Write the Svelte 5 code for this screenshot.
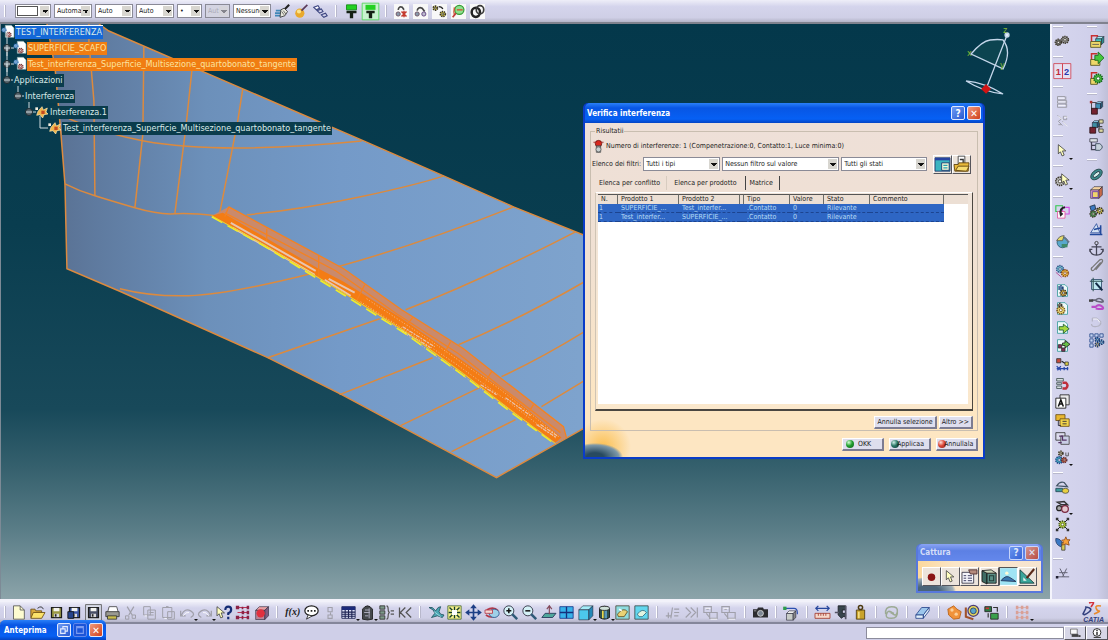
<script>
  // Small drawing helpers, every icon is drawn on an 18x18 grid
  const gear = (x, y, r, fill = "#e8c84c", line = "#3a3528") =>
    `<circle cx="${x}" cy="${y}" r="${r}" fill="${fill}" stroke="${line}" stroke-width="2" stroke-dasharray="1.6 .9"/><circle cx="${x}" cy="${y}" r="${r * 0.4}" fill="#fff" stroke="${line}"/>`;
  const sheet = `<path d="M3 2h9l3 3v11H3z" fill="#eefafa" stroke="#3a9c9c"/>`;
  const disk = (c) =>
    `<path d="M3 3h12v12H3z" fill="${c}" stroke="#1c1c1c" stroke-width="1.500"/><path d="M5.500 3.500h7v4h-7z" fill="#f4f4f0"/><path d="M6 10.500h6v4H6z" fill="#d8d8dc"/><path d="M7 11h2v3H7z" fill="#222"/>`;
  const cube = (x, y, s, a, b, c) =>
    `<path d="M${x} ${y + s * 0.4}l${s * 0.4} -${s * 0.4}h${s}l-${s * 0.4} ${s * 0.4}z" fill="${a}" stroke="#223"  stroke-width=".7"/><path d="M${x} ${y + s * 0.4}h${s}v${s}h-${s}z" fill="${b}" stroke="#223" stroke-width=".7"/><path d="M${x + s} ${y + s * 0.4}l${s * 0.4} -${s * 0.4}v${s}l-${s * 0.4} ${s * 0.4}z" fill="${c}" stroke="#223" stroke-width=".7"/>`;
  const arrow = (x, y) =>
    `<path d="M${x} ${y}v11l2.500 -2.500 2 5 2.500 -1 -2 -5h4z" fill="#ffffc0" stroke="#333" stroke-width=".9"/>`;
  const stroke = (d, c = "#333", w = 1) =>
    `<path d="${d}" fill="none" stroke="${c}" stroke-width="${w}"/>`;
  const fill = (d, c, s = "none") => `<path d="${d}" fill="${c}" stroke="${s}"/>`;
  const white = `<path d="M0 0h18v18H0z" fill="#f8f8f8"/>`;
  const ghost = "#a0a0aa";

  const icons = {
    brush: stroke("M1 8h7M0 11h8M0 14h9", "#3f87b8", 2) + fill("M7 7l4 -2 4 4 -3 5 -6 2z", "#e8e8dc", "#333") + stroke("M12 6l5 -5", "#222", 2.5) + stroke("M8 9l3 4M10 8l3 4", "#555"),
    wand: `<circle cx="7" cy="11" r="5.500" fill="#e9a92c"/><circle cx="6" cy="9" r="2.500" fill="#fbe48c"/>` + stroke("M9 8l7 -7", "#5a3a5a", 2),
    chain: stroke("M1 4l5 -2 2 3 -4 2zM5 8l5 -2 2 3 -4 2zM10 13l5 -2 2 3 -4 2z", "#3c4580", 1.3) + fill("M2.500 4.500l3 -1.500 1 1.500 -2 1z", "#fff"),
    paint: fill("M3 1h12v6H3z", "#23d022", "#118811") + fill("M3 8h12v3H11v6H7v-6H3z", "#142014"),
    paintOn: `<path d="M-1 -1h20v20h-20z" fill="#c8f2cf" stroke="#4ed257"/>` + fill("M3 1h12v6H3z", "#23d022") + fill("M4 8h10v3H11v6H7v-6H4z", "#142014"),
    clashX: white + stroke("M5 7q1 -5 5 -3l2 3", "#444", 2) + `<circle cx="5" cy="12" r="2.500" fill="#89a" stroke="#645"/>` + stroke("M9 9l6 6M15 9l-6 6M12 8v8", "#c4392c", 1.8),
    clash: white + stroke("M5 8q1 -5 6 -3l3 4", "#444", 2) + `<circle cx="5" cy="12" r="2.500" fill="#89a" stroke="#645"/><circle cx="13" cy="12" r="2.500" fill="#bbc" stroke="#537"/>`,
    clashGears: white + gear(4, 5, 2.5, "#ded24a") + gear(13, 12, 3, "#ded24a") + stroke("M8 3q4 0 5 3", "#222", 1.5),
    clashFind: white + `<circle cx="10" cy="7" r="5.500" fill="#8ee08e" stroke="#369c36" stroke-width="1.500"/>` + stroke("M7 7h7M4 4q-1 6 0 9", "#d04a2c", 1.5) + stroke("M6 11l-4 5", "#c23a3a", 2),
    ring: white + `<ellipse cx="7" cy="10" rx="5" ry="5.500" fill="none" stroke="#222" stroke-width="3"/><ellipse cx="12" cy="7" rx="4.500" ry="5" fill="none" stroke="#3a3a3a" stroke-width="2"/>`,

    gears: gear(4, 10, 3.5, "#777") + gear(12, 7, 4, "#999"),
    views: `<path d="M-1.500 -.5h10.500v18h-10.500zM9 -.5h10v18H9z" fill="#e6e0f0" stroke="#cf4250" stroke-width="1"/>`,
    ghostBox: stroke("M3 3h9v4H3zM3 8h11v3H3zM3 12h11v4H3zM13 3v12", ghost, 1.2) + stroke("M4 5h8M4 9.500h9M4 14h9", "#fff"),
    ghostBox2: stroke("M3 3l5 4 -4 3 5 5M10 4h4v4h-4zM9 10l5 5M4 14h4", ghost, 1.2) + stroke("M4 4l5 4M11 5h4M10 11l5 5", "#fff"),
    pointer: arrow(4, 2),
    pointerGear: gear(6, 10, 5, "#bbb") + arrow(8, 1),
    sketch: `<path d="M1 2h8v7H1z" fill="none" stroke="#2fc84c" stroke-width="1.300"/><path d="M9 4h8v8H9z" fill="none" stroke="#d24ce0" stroke-width="1.300"/><path d="M3 9h9v8H3z" fill="#fdf7fa" stroke="#e0569c"/>` + stroke("M12 4q-7 1 -5 9l2 -2", "#222", 2.5),
    globe: `<circle cx="9" cy="10" r="6.500" fill="#58a8cc" stroke="#2b5a70"/>` + fill("M2 8q3 -6 9 -6l-2 6z", "#e6dc6c", "#555") + fill("M8 12h7v4H8z", "#3f8a6a") + stroke("M11 4l6 6", "#678", 2),
    gearA: gear(6, 6, 4, "#76c6cf", "#33548a") + gear(12, 11, 4, "#f0c040", "#8a4a1c") + stroke("M1 10l7 6", "#b0408a"),
    sheetA: sheet + gear(7, 6, 2.5, "#79b6d8", "#24427a") + gear(10, 12, 3.5, "#f0c040"),
    sheetB: sheet + gear(7, 11, 4.5, "#f2dc70", "#7a5a24") + gear(6, 5, 2, "#eee"),
    sheetC: sheet + fill("M5 8h5V5l7 5.500 -7 5.500v-4H5z", "#a6d840", "#175a2a"),
    sheetD: sheet + fill("M4 8h4v4H4zM8 12h4v4H8z", "#8a2f5c", "#333") + fill("M9 6h3V3l6 4.500 -6 4.500V9H9z", "#68c048", "#222"),
    constraint: fill("M2 2h5v5H2z", "#c84b3c", "#333") + stroke("M8 5l5 3", "#222", 1.5) + fill("M12 6h4v4h-4z", "#ddd040", "#444") + stroke("M2 14h14M2 11l5 5M7 11l-4 5M11 12v4M15 12v4", "#2747a8", 1.5),
    magnet: fill("M2 3h8v3H2zM2 8h6v2H2zM2 12h6v3H2z", "#d6dee0", "#455") + stroke("M9 8h4q4 3.500 0 7H9", "#bf2f3c", 3),
    textBox: fill("M6 1h11v12H6z", "#e8e8e8", "#222") + fill("M1 5h12v12H1z", "#fff", "#111") + stroke("M4 15l3 -8 3 8M5 12h4", "#111", 1.8),
    tagBox: fill("M1 2h11v7H1z", "#e8b730", "#6a4d14") + fill("M6 7h11v9H6z", "#f3d54c", "#6a4d14") + stroke("M9 10h5M9 13h5M4 9v6h3", "#223", 1),
    viewBox: fill("M1 2h11v9H1z", "#dde", "#333") + fill("M7 6h10v10H7z", "#c9cee6", "#444") + stroke("M5 6h4v5h5M4 14h4", "#536", 1.5),
    bits: gear(7, 4, 2.5, "#f4edc0") + gear(5, 12, 4, "#3fb0c0", "#254588") + gear(11, 12, 3, "#d2653a", "#5b2f3a") + stroke("M13 3v4h3V3", "#444"),
    simA: stroke("M2 7q4 -6 9 -4l4 5z", "#456", 1.5) + fill("M1 10h8v4H1z", "#3f9c9c", "#245") + `<ellipse cx="12.500" cy="13" rx="4" ry="3" fill="#e8cf40" stroke="#554"/>`,
    simB: stroke("M3 4l8 -1 4 4H8z", "#333", 1.8) + `<circle cx="5" cy="11" r="3" fill="#aaa" stroke="#222" stroke-width="1.500"/><circle cx="12" cy="12" r="4" fill="#e4c6ce" stroke="#7b2940" stroke-width="1.500"/>`,
    explode: gear(9, 9, 4, "#b8d43c", "#4a5a20") + stroke("M2 2l4 4M16 2l-4 4M2 16l4 -4M16 16l-4 -4", "#222", 1.2) + fill("M1 1h3v3H1zM14 1h3v3h-3zM1 14h3v3H1zM14 14h3v3h-3z", "#333"),
    parrot: fill("M1 3q6 0 8 6l-2 4q-7 -3 -6 -10z", "#3a78c4", "#24406a") + fill("M8 8h4v9H8z", "#d8cc50", "#444") + fill("M13 1l1.500 3.500 3.500 0 -2 2.500 1 4 -4 -1.500 -4 1.500 1 -4 -2 -2 3.500 -.5z", "#f6a13a", "#8a4a1c"),
    axis: stroke("M2 13h15M6 3l5 10M14 3l-5 10M5 8h10", "#667", 1.2) + fill("M1 12h3v3H1z", "#223"),

    prodA: stroke("M3 9V2h7v3", "#c83030", 1.8) + cube(8, 3, 7, "#a3eef0", "#3fc6c0", "#2a8c8c") + fill("M2 9h12v7H2z", "#eed86a", "#51501c") + stroke("M4 12.500h8", "#555"),
    prodB: stroke("M3 9V2h7", "#c83030", 1.8) + fill("M2 9h11v7H2z", "#eed86a", "#51501c") + fill("M7 4h4V0l7 7 -7 7V10H7z", "#46c83c", "#14641c"),
    prodC: stroke("M3 9V2h7", "#c83030", 1.8) + fill("M2 9h8v7H2z", "#eed86a", "#51501c") + gear(11, 9, 5, "#46b83c", "#14641c"),
    tree: stroke("M3 3h6M3 3v8M9 8h6", "#333") + cube(8, 2, 6, "#8ccfe8", "#3f8fb4", "#28617c") + fill("M3 10h7v7H3z", "#742230", "#2a1015") + fill("M1 1h3v3H1z", "#a33"),
    tree2: stroke("M12 3v12M12 3h4M12 9h4M12 15h4", "#444", 1.5) + cube(4, 2, 6, "#8ccfe8", "#3f8fa4", "#28617c") + fill("M1 10h7v7H1z", "#742230", "#2a1015") + fill("M12 1h5v4h-5zM12 12h5v4h-5z", "#ddd9a0", "#444"),
    tree3: fill("M1 2h9v4H1z", "#dde3e6", "#445") + stroke("M3 6v9h5M3 10h5", "#445", 1.5) + fill("M8 8h5q6 4 0 8H8z", "#c6d2da", "#345"),
    clip: `<ellipse cx="9" cy="9" rx="8" ry="5" transform="rotate(-40 9 9)" fill="#3c8a8c" stroke="#1f4143"/><ellipse cx="9" cy="9" rx="5" ry="2" transform="rotate(-40 9 9)" fill="#d6eeea" stroke="#234"/>`,
    contact: cube(2, 2, 10, "#f6d4a0", "#e3a0d0", "#c66a48") + fill("M4 8h7v7H4z", "#efd56a", "#5b3aa2"),
    offset: fill("M1 3l6 -2 1 5 -5 3z", "#3c78c0", "#234") + gear(5, 12, 3.5, "#49a65a") + gear(13, 8, 3.5, "#e8d850") + stroke("M7 6l5 0", "#333"),
    angle: fill("M2 13L9 2l4 11z", "#d4e2f4", "#2a4d9a") + stroke("M1 15h15M14 4v10M6 9l9 -2", "#224a9c", 1.8),
    anchor: `<circle cx="9" cy="2.500" r="2" fill="none" stroke="#444" stroke-width="1.200"/>` + stroke("M9 4v13M3 7h12M1 10q1 7 8 7t8 -7M1 13v-3h3M17 13v-3h-3", "#445", 1.5),
    paperclip: stroke("M14 4l-8 9q-2 2 -3 0t1 -3l9 -9q2 -1 3 0t-1 4l-7 8", "#777", 1.5),
    quick: fill("M3 3h12v12H3z", "#bfe9f2", "#2c4c6a") + stroke("M1 5h16M5 1v16", "#355", 1.3) + stroke("M8 7l8 9", "#122a44", 2.5),
    flex: stroke("M3 5h5q4 -4 8 0t-8 1", "#667", 2) + stroke("M3 13h5q4 -4 8 0t-8 2", "#b94cc8", 2.5) + fill("M0 4h5v3H0z", "#444"),
    ghostLoop: stroke("M4 5h5l5 4q1 5 -5 6t-6 -3M4 5v4", "#b4b4c4", 1.5) + stroke("M5 6h5l3 4", "#fff"),
    pattern: fill("M1 1h4v4H1zM7 1h4v4H7zM13 1h4v4h-4zM1 7h4v4H1zM1 13h4v4H1z", "#c4d3f0", "#29498c") + gear(10, 8, 2.5, "#5fa8e0", "#1d3c70") + gear(10, 14, 2.5, "#e8c060", "#1d3c70") + gear(15, 11, 2.5, "#7fc8e8", "#1d3c70"),

    newDoc: fill("M3 1h8l5 5v11H3z", "#fdfbd0", "#555") + stroke("M11 1v5h5", "#555"),
    open: fill("M1 5h5l1 2h7v8H1z", "#d8a83c", "#6a4c12") + fill("M1 16l3 -7h14l-4 7z", "#fbe26a", "#6a4c12") + stroke("M9 4q5 -4 7 1", "#222"),
    save: disk("#9a9844"),
    saveAll: disk("#3a56a8") + fill("M1 8h7v8H1z", "#26448c", "#111"),
    saveOn: `<path d="M-.5 -.5h19v19h-19z" fill="#d8dbe8" stroke="#555"/>` + disk("#474e66"),
    print: fill("M5 2h9l2 7H3z", "#fff", "#444") + fill("M1 8h16v6H1z", "#9a9a92", "#333") + fill("M3 13h11v4H3z", "#c9bd4c", "#333"),
    cut: stroke("M5 2l6 10M13 2L7 12", ghost, 1.5) + stroke("M3 13h4v4H3zM11 12h4v4h-4z", ghost, 1.2),
    copy: stroke("M2 2h8v10H2zM7 6h9v11H7zM9 9h5M9 12h5", ghost, 1.2) + stroke("M3 13h3", "#fff"),
    paste: stroke("M2 3h11v12H2zM6 2h3M8 8h8v9H8z", ghost, 1.2) + stroke("M4 16h3", "#fff"),
    undo: stroke("M2 7v6h6M3 12q4 -9 11 -5t0 8", ghost, 1.5) + stroke("M5 13q3 -5 7 -4", "#fff"),
    redo: stroke("M16 7v6h-6M15 12Q11 3 4 7t0 8", ghost, 1.5) + stroke("M13 13q-3 -5 -7 -4", "#fff"),
    help: arrow(0, 2) + stroke("M10 6q0 -4 3.500 -4t3.500 3.500 -3.500 4.500v2M13.500 14v3", "#142c74", 2.6),
    spec: stroke("M3 3h12M3 9h12M3 15h12", "#c03456", 1.2) + fill("M1 1h4v4H1zM8 2h2v3H8zM14 1h3v4h-3zM8 7h3v4H8zM14 7h3v4h-3zM1 13h4v4H1zM8 13h2v4H8zM14 13h3v4h-3z", "#8a2346"),
    redCube: cube(2, 2, 11, "#e8a0a4", "#b98498", "#7f5c80") + `<circle cx="8" cy="10" r="5" fill="#e0303e"/>`,
    bubble: `<ellipse cx="9" cy="7" rx="8" ry="6" fill="#fff" stroke="#222" stroke-width="1.500"/>` + fill("M5 12l-2 5 7 -4z", "#fff", "#222") + stroke("M4 7h2M8 7h2M12 7h2", "#222", 2),
    ghostLock: stroke("M6 3h5v5H6zM9 9v3M6 12h5v4H6z", ghost, 1.3),
    grid: fill("M1 2h16v14H1z", "#dfe3f8", "#1c2252") + fill("M1 2h16v4H1z", "#1c2a7a") + stroke("M1 8.500h16M1 11h16M1 13.500h16M5 6v10M9 6v10M13 6v10", "#1c2252", 1.3),
    law: fill("M3 5q6 -8 12 0v12l-6 1 -6 -1z", "#44484c", "#1c1c1c") + stroke("M6 6h5M5 9h7M6 13h4M11 4v12", "#aab", 1.2),
    formula: fill("M1 1h6v4H1zM1 7h6v4H1zM1 13h6v4H1z", "#7d9a8a", "#333") + stroke("M9 1q2 0 2 4t2 4q-2 0 -2 4t-2 4M14 7h4M14 11h4", "#555", 1.4),
    back: stroke("M3 3v12M10 3L4 9l6 6M17 3l-6 6 6 6", "#555", 1.5),
    fly: fill("M0 3l4 0 4 4 3 -4 3 -1 -2 6 2 3 4 1 -2 3 -6 -2 -7 2 4 -5 -2 -4z", "#4ba6b4", "#21505e") + stroke("M6 8l8 6", "#a8e0e4"),
    fitAll: fill("M1 1h16v16H1z", "#f4f08a", "#4a6a3a") + stroke("M9 2v14M2 9h14M3 3l4 4M15 3l-4 4M3 15l4 -4M15 15l-4 -4", "#143c2c", 1.6) + fill("M6 6h6v6H6z", "#fff"),
    pan: stroke("M9 2v14M2 9h14", "#1d3f86", 2) + fill("M9 -1l4 5H5zM9 19l4 -5H5zM-1 9l5 -4v8zM19 9l-5 -4v8z", "#1d3f86"),
    rotate: stroke("M2 6q8 -5 14 1M1 12q8 5 11 0", "#b43848", 1.8) + `<ellipse cx="11" cy="10" rx="6" ry="5" fill="#9fd0e8" stroke="#28548c"/>` + fill("M0 6h9v4H0z", "#f2d8d4", "#b43848"),
    zoomIn: `<circle cx="7" cy="7" r="6" fill="#d4f1f6" stroke="#223"/>` + stroke("M4 7h6M7 4v6", "#111", 1.8) + stroke("M11 11l6 6", "#2f5a78", 3),
    zoomOut: `<circle cx="7" cy="7" r="6" fill="#d4f1f6" stroke="#223"/>` + stroke("M4 7h6", "#111", 1.8) + stroke("M11 11l6 6", "#2f5a78", 3),
    normal: fill("M1 15l4 -5h13l-4 5z", "#4fa89c", "#235") + stroke("M10 11V2M7 5l3 -4 3 4", "#844a5a", 1.4),
    multi: fill("M1 2h16v14H1z", "#37b2ea", "#1a3a8c") + stroke("M9 2v14M1 9h16", "#16307c", 1.6),
    iso: cube(1, 1, 12, "#a4ecf8", "#4cc8ec", "#2388b8"),
    shading: fill("M3 4q6 -5 12 0v11q-6 4 -12 0z", "#2f4f4c", "#111") + fill("M6 5h2v11H6z", "#ecd84c") + fill("M9 5h3v11H9z", "#5896b8") + `<ellipse cx="9" cy="4" rx="6" ry="2.500" fill="#cfe0d8" stroke="#222"/>`,
    hideShow: fill("M1 1h16v16H1z", "#8edce0", "#4a4a3a") + fill("M3 11q7 -9 12 -3l-4 6H4z", "#e9d274", "#5a4a20") + stroke("M5 5l3 2", "#fff", 2),
    swap: fill("M1 1h16v16H1z", "#62d6ee", "#3a4a4a") + fill("M4 11q6 -8 11 -2l-5 5H6z", "#e2f4e0", "#2a6a80"),
    ghostA: stroke("M1 13h6M4 9v7M9 3L7 16M11 5h6M11 9h6M11 13h5", ghost, 1.4),
    ghostB: stroke("M2 3l6 6 -6 6M8 3l6 6 -6 6M16 3v12", ghost, 1.4),
    ghostC: stroke("M1 2l9 0 0 7 -9 0zM8 9h9v7H8zM4 10l4 5M4 5h3", ghost, 1.4) + stroke("M9 17h8M3 4h6", "#fff"),
    camera: fill("M0 5h5l1 -2h6l1 2h5v10H0z", "#2c2c30") + `<circle cx="9" cy="10" r="3.500" fill="#7c8694" stroke="#ddd"/>` + stroke("M1 7h3", "#aaa"),
    scan: stroke("M2 4h10q4 0 4 5v2", "#2d50b0", 1.4) + fill("M-1 2h4v4H-1z", "#2d9c4c") + cube(3, 7, 8, "#eee", "#c8ccc8", "#888"),
    measure: stroke("M1 4h16M4 1L1 4l3 3M14 1l3 3 -3 3", "#26469c", 1.5) + fill("M0 10h18v6H0z", "#f6d8ca", "#a13a2c") + stroke("M4 10v3M7 10v3M10 10v3M13 10v3", "#a13a2c"),
    caliper: fill("M5 1h9v5h-4v4h4v4h-3l-2 2 -4 -4z", "#38454c", "#1a1f24") + stroke("M14 1v16M1 9h5", "#556", 2),
    weight: fill("M4 6h10v11H4z", "#c9a32c", "#4c3a10") + `<circle cx="9" cy="3" r="2.500" fill="none" stroke="#4c3a10" stroke-width="1.800"/>` + fill("M6 8h2v8H6z", "#f2dc80"),
    swirl: stroke("M2 11q-1 -9 7 -9t7 6 -5 3 -4 -2M16 7q1 9 -7 9t-6 -5 5 -3 4 2", "#9caa94", 1.8),
    eraser: fill("M1 12L8 3h9l-7 9z", "#9cc6ec", "#28468c") + fill("M1 12h9v4H1zM10 12l7 -9v4l-7 9z", "#e2f0fa", "#28468c"),
    foam: fill("M1 5l7 -4 4 4 5 3 -2 8 -7 1 -6 -5z", "#f0923a", "#b75f14") + `<circle cx="6" cy="6" r="2" fill="#fbd09a"/><circle cx="11" cy="11" r="2" fill="#fbd09a"/>`,
    section: `<circle cx="10" cy="7" r="6.500" fill="#e6d85a" stroke="#4b3c78" stroke-width="1.500"/><circle cx="10" cy="7" r="3.500" fill="#58a4c8" stroke="#2a3c6a"/>` + stroke("M1 3v11l9 3", "#a0522c", 2.5),
    convert: fill("M1 2h8v6H1z", "#2a7a42", "#222") + fill("M8 10h9v7H8z", "#3aa04c", "#222") + stroke("M11 3h5v5M5 10v5", "#333", 1.4) + fill("M2 3h4v2H2z", "#c33"),
    dots: stroke("M2 3h14M2 9h14M2 15h14", "#d8a9a4") + fill("M1 1h3v4H1zM7 1h3v4H7zM13 1h3v4h-3zM1 7h3v4H1zM7 7h3v4H7zM13 7h3v4h-3zM1 13h3v4H1zM7 13h3v4H7zM13 13h3v4h-3z", "#d9a096"),

    part: fill("M5 -1h9l4 4v14H5z", "#fff", "#8aa") + gear(3, 6, 3, "#bcd8f4", "#2b6cb0") + gear(10, 13, 3.5, "#f0a0a0", "#6a3434"),
    clashNode: fill("M9 1l2 5 6 -3 -2 6 3 3 -6 1 -2 5 -4 -5 -5 1 2 -6z", "#f0b44c", "#fbe7b0") + fill("M8 7h5v5H8z", "#c44a20") + fill("M-1 2h4v4H-1z", "#f4efe0"),
    lights: `<circle cx="9" cy="5" r="4.500" fill="#d8281e" stroke="#5a100c"/>` + fill("M6 8h6v9H6z", "#8a9494", "#444") + `<circle cx="9" cy="13" r="3.500" fill="#c8d0d0" stroke="#555"/>` + stroke("M2 3h3M13 3h3", "#a33", 1.5),
    window: fill("M0 1h18v16H0z", "#3bb4c0", "#14306a") + fill("M0 1h18v3H0z", "#2844a0") + fill("M8 7h9v9H8z", "#f4f8d8", "#14306a") + stroke("M10 10h5M10 13h5", "#2aa0b0", 1.5),
    folder: fill("M5 -1h8v11H5z", "#fff", "#333") + stroke("M7 3h4v5", "#333", 1.6) + fill("M0 9h5l1 -2h12l-1 10H1z", "#e9b93a", "#5a3d0a") + fill("M2 16l3 -5h13l-3 6z", "#f8dc70", "#5a3d0a"),
    record: `<circle cx="9" cy="10" r="4.500" fill="#8a1414"/>`,
    options: fill("M0 4h14v13H0z", "#f4f4fa", "#334") + stroke("M2 8h3M7 8h5M2 11h3M7 11h5M2 14h3M7 14h5", "#446", 1.2) + fill("M8 1h10v5h-8z", "#b48a7c", "#4a2a2a"),
    album: fill("M0 2l6 3v13l-6 -3z", "#3f6c64", "#111") + fill("M6 5h11v12H6z", "#5a8f86", "#111") + fill("M0 2l11 -1 6 4H6z", "#cdd6ba", "#222") + stroke("M9 8h5v6H9z", "#243c38", 1.3),
    image: fill("M-1 -1h20v20H-1z", "#9fe4f4") + fill("M0 14q6 -8 12 -3l6 4z", "#3978b0", "#235") + `<circle cx="7" cy="5" r="2" fill="#fffbd8"/>`,
    vector: fill("M0 1v16h17z", "#3aa59a", "#173c3c") + fill("M4 10v4h4z", "#e8f4f0") + stroke("M8 11l9 -11", "#5a2a1a", 2.5),
    restore: stroke("M3 7h8v8H3zM7 7V3h8v8h-4", "#e4ecff", 2),
    maximize: stroke("M3 3h12v12H3zM3 5h12", "#7c9cf0", 2),
    terminal: fill("M1 2h12v9H1z", "#f8f8f8", "#333") + fill("M3 11h12v5H3z", "#444") + fill("M15 13h4v3h-4z", "#333"),
    info: `<circle cx="9" cy="8" r="7" fill="#fff" stroke="#333" stroke-width="1.800"/>` + stroke("M9 7v6M9 3v3", "#222", 2.5) + stroke("M3 17h13", "#444", 2),
  };

  // "|" is a separator, a trailing "+" adds the flyout arrow
  const topTools = ["brush", "wand", "chain", "|", "paint", "paintOn", "|", "clashX", "clash", "clashGears", "clashFind", "ring"];
  const sideTools = ["|", "gears", "|", "views", "|", "ghostBox", "ghostBox2", "|", "pointer+", "|", "pointerGear+", "|", "sketch", "|", "globe", "|", "gearA", "sheetA", "sheetB", "sheetC", "sheetD", "constraint", "magnet", "textBox", "tagBox", "viewBox", "bits+", "|", "simA", "simB+", "explode", "parrot", "|", "axis"];
  const productTools = ["|", "prodA", "prodB", "prodC", "|", "tree", "tree2", "tree3", "|", "clip", "contact", "offset", "angle", "anchor", "paperclip", "quick", "flex", "ghostLoop", "pattern"];
  const bottomTools = ["|", "newDoc", "open", "save", "saveAll", "saveOn", "print", "cut", "copy", "paste", "undo+", "redo+", "help", "spec", "redCube", "|", "fx", "bubble", "ghostLock", "grid+", "law+", "formula", "back", "|", "fly", "fitAll", "pan", "rotate", "zoomIn", "zoomOut", "normal", "multi", "iso+", "shading+", "hideShow", "swap", "|", "ghostA", "ghostB", "ghostC", "ghostC", "|", "camera", "|", "scan", "|", "measure", "caliper", "weight", "|", "swirl", "|", "eraser", "|", "foam", "section", "convert", "|", "dots+"];

  const combos = [
    { label: "Colore", value: "", size: "m", swatch: true },
    { label: "Trasparenza", value: "Automa", size: "l" },
    { label: "Spessore", value: "Auto", size: "l" },
    { label: "Tipo linea", value: "Auto", size: "l" },
    { label: "Punto", value: "•", size: "s" },
    { label: "Rendering", value: "Aut", size: "s", off: true },
    { label: "Layer", value: "Nessunc", size: "l" },
  ];

  const nodes = [
    { text: "TEST_INTERFERENZA", depth: 0, icon: "part", kind: "active" },
    { text: "SUPERFICIE_SCAFO", depth: 0, toggle: "+", icon: "part", kind: "hot" },
    { text: "Test_interferenza_Superficie_Multisezione_quartobonato_tangente", depth: 0, toggle: "+", icon: "part", kind: "hot" },
    { text: "Applicazioni", depth: 0, toggle: "-", last: true },
    { text: "Interferenza", depth: 1, toggle: "-", last: true },
    { text: "Interferenza.1", depth: 2, toggle: "-", icon: "clashNode", last: true },
    { text: "Test_interferenza_Superficie_Multisezione_quartobonato_tangente", depth: 3, elbow: true, icon: "clashNode" },
  ];

  const filters = [
    { label: "Elenco dei filtri:", value: "Tutti i tipi" },
    { label: "Valore", value: "Nessun filtro sul valore" },
    { label: "Stato", value: "Tutti gli stati" },
  ];

  const tabs = ["Elenca per conflitto", "Elenca per prodotto", "Matrice"];
  let activeTab = $state(1);

  const columns = ["N.", "Prodotto 1", "Prodotto 2", "", "Tipo", "Valore", "Stato", "Commento"];
  const rows = [
    ["1", "SUPERFICIE_...", "Test_interfer...", "", ".Contatto", "0", "Rilevante", ""],
    ["1", "Test_interfer...", "SUPERFICIE_...", "", ".Contatto", "0", "Rilevante", ""],
  ];
</script>

{#snippet icon(name)}
  <svg class="icon" viewBox="0 0 18 18" aria-hidden="true">{@html icons[name]}</svg>
{/snippet}

{#snippet tools(list)}
  {#each list as item}
    {@const name = item.replace("+", "")}
    {#if item === "|"}
      <span class="sep"></span>
    {:else}
      <button class="tool" class:flyout={item.endsWith("+")} aria-label={name}>
        {#if name === "views"}
          <svg class="icon" viewBox="0 0 18 18">
            {@html icons.views}
            <text x="4" y="13" class="view-no red">1</text>
            <text x="14" y="13" class="view-no blue">2</text>
          </svg>
        {:else if name === "fx"}
          <span class="fx">f(x)</span>
        {:else}
          {@render icon(name)}
        {/if}
      </button>
    {/if}
  {/each}
{/snippet}

<div class="app">
  <header class="bar top">
    <span class="sep"></span>
    <div class="combos">
      {#each combos as c}
        <span class="combo {c.size}" class:swatch={c.swatch} class:off={c.off}>
          <select aria-label={c.label} disabled={c.off}><option>{c.value}</option></select>
        </span>
      {/each}
    </div>
    {@render tools(topTools)}
  </header>

  <main>
    <section class="viewport">
      <svg class="scene" viewBox="0 23 1050 577" preserveAspectRatio="xMinYMin slice" aria-hidden="true">
        <defs>
          <linearGradient id="skin" x1="45" y1="0" x2="580" y2="0" gradientUnits="userSpaceOnUse">
            <stop offset="0" stop-color="#586f90" />
            <stop offset=".1" stop-color="#5f7ba0" />
            <stop offset=".3" stop-color="#6c90ba" />
            <stop offset=".55" stop-color="#749ac8" />
            <stop offset="1" stop-color="#7ea3cd" />
          </linearGradient>
        </defs>
        <path fill="url(#skin)" d="M46 23H98L108 30 363 140 443 175 513 206 590 237V424L496 477 341 394 267 357 120 291 66 268 64 183 60 133 54 66z" />
        <g class="wire">
          <path d="M98 23L108 30 363 140 443 175 513 206 590 237M590 424L496 477 341 394 267 357 120 291 66 268 64 183 60 133 54 66 46 23" />
          <path d="M64 183Q78 190 94 195T134 207 174 213 215 215" />
          <path d="M68 118Q104 133 143 140T236 147 361 140" />
          <path d="M88 23V40L93 100 94 195M143 46L142 133 134 207M191 70L185 127 174 213M242 88L237 120 219 212" />
          <path d="M246 214Q300 209 360 196T443 175" />
          <path d="M119 288Q150 296 188 295T310 273M337 266Q420 243 513 206" />
          <path d="M267 357L379 318M405 309Q480 280 575 231" />
          <path d="M339 394L432 357M458 344Q520 318 584 281" />
          <path d="M400 425L479 387M501 376Q540 358 584 331M451 451L515 419M541 406L584 380" />
        </g>
        <path class="flange" d="M228 206L343 268 401 309 463 348 501 378 563 426 566 437 554 443 511 411 463 374 405 332 343 293 263 244 211 215z" />
        <path class="weld" d="M211 215L222 212 318 268 343 281 400 317 455 355 505 391 561 437 555 442 511 410 463 373 405 331 343 292 263 243z" />
        <path class="flange-line" d="M228 206L343 268 401 309 463 348 501 378 563 426 566 437M224 212L335 270 396 313 458 353 500 386 560 432M228 206L224 216M266 228V243M318 255V277M364 284L356 300M412 317L402 330M450 341L442 356M491 371L482 386M533 404L523 420" />
        <path class="shine" d="M230 222L315 270M232 227L314 274M324 279L350 295M328 278L354 292" />
        <path class="mesh" d="M360 301L401 327 455 363 505 399 556 438M366 298L430 340 500 389 556 434M370 308L450 366 530 424" />
        <path class="shine thin" d="M400 329L430 347M402 326L434 346M505 397L530 415M536 424L556 437M540 424L558 436M480 384L496 394" />
        <path class="contact" d="M211 216L263 245 343 294 405 333 463 375 511 412 554 443" />
        <path class="contact-thin" d="M211 215L263 244 343 292 405 331 463 373 511 410 555 443" />

        <g class="compass">
          <path class="dome" d="M971 53Q982 40 990 39T1003 39Q1012 50 1003 68z" />
          <path d="M1007 34L986 88M966 80Q985 82 1003 93Q984 91 966 80z" />
          <circle cx="1007" cy="34" r="2" />
          <path class="pivot" d="M982 88l4 -4 4 4 -4 4z" />
          <text x="1003" y="32">z</text>
          <text x="967" y="55">x</text>
          <text x="1000" y="67">y</text>
        </g>
      </svg>

      <ul class="tree">
        {#each nodes as n}
          <li class="depth-{n.depth}">
            {#if n.toggle || n.elbow}
              <svg class="knot" viewBox="0 0 12 16" aria-hidden="true">
                {#if n.elbow}
                  <path d="M4 -4V8H12" />
                {:else}
                  <path d="M6 {n.depth ? -2 : -8}V{n.last ? 8 : 16}M6 8H13" />
                  <circle cx="6" cy="8" r="3.500" />
                  <path d={n.toggle === "+" ? "M3 8h6M6 5v6" : "M3 8h6"} />
                {/if}
              </svg>
            {/if}
            {#if n.icon}{@render icon(n.icon)}{/if}
            <span class="label {n.kind ?? ''}">{n.text}</span>
          </li>
        {/each}
      </ul>

      <div class="window dialog" role="dialog" aria-label="Verifica interferenza">
        <div class="title">
          <h2>Verifica interferenza</h2>
          <button class="cap" aria-label="Guida">?</button>
          <button class="cap close" aria-label="Chiudi">✕</button>
        </div>
        <div class="body">
          <fieldset>
            <legend>Risultatii</legend>
            <p class="summary">{@render icon("lights")}Numero di interferenze: 1 (Compenetrazione:0, Contatto:1, Luce minima:0)</p>
            <div class="filters">
              {#each filters as f, i}
                {#if i === 0}<label for="filter-0">{f.label}</label>{/if}
                <span class="combo f{i}">
                  <select id="filter-{i}" aria-label={f.label}><option>{f.value}</option></select>
                </span>
              {/each}
              <div class="pair">
                <button class="raised" aria-label="Anteprima">{@render icon("window")}</button>
                <button class="raised" aria-label="Esporta">{@render icon("folder")}</button>
              </div>
            </div>
            <div class="tabs" role="tablist">
              {#each tabs as tab, i}
                <button role="tab" aria-selected={activeTab === i} class:active={activeTab === i} onclick={() => (activeTab = i)}>{tab}</button>
              {/each}
            </div>
            <div class="panel">
              <table>
                <thead>
                  <tr>
                    {#each columns as col, i}<th class="c{i}">{col}</th>{/each}
                    <th></th>
                  </tr>
                </thead>
                <tbody>
                  {#each rows as row}
                    <tr>
                      {#each row as cell}<td>{cell}</td>{/each}
                      <td class="rest"></td>
                    </tr>
                  {/each}
                </tbody>
              </table>
            </div>
            <div class="actions">
              <button class="raised text">Annulla selezione</button>
              <button class="raised text">Altro &gt;&gt;</button>
            </div>
          </fieldset>
          <div class="actions main-actions">
            <button class="raised text wide"><i class="ball green"></i>OKK</button>
            <button class="raised text wide tight"><i class="ball teal"></i>Applicaa</button>
            <button class="raised text wide tight"><i class="ball red"></i>Annullala</button>
          </div>
        </div>
      </div>

      <div class="window capture" role="dialog" aria-label="Cattura">
        <div class="title">
          <h2>Cattura</h2>
          <button class="cap" aria-label="Guida">?</button>
          <button class="cap close" aria-label="Chiudi">✕</button>
        </div>
        <div class="body">
          <button class="raised" aria-label="Registra">{@render icon("record")}</button>
          <button class="raised" aria-label="Selezione">{@render icon("pointer")}</button>
          <button class="raised" aria-label="Opzioni">{@render icon("options")}</button>
          <span class="space"></span>
          <button class="raised" aria-label="Album">{@render icon("album")}</button>
          <button class="raised pressed" aria-label="Pixel">{@render icon("image")}</button>
          <button class="raised" aria-label="Vettore">{@render icon("vector")}</button>
        </div>
      </div>
    </section>

    <aside>
      <div class="column">{@render tools(sideTools)}</div>
      <div class="column products">{@render tools(productTools)}</div>
    </aside>
  </main>

  <footer>
    <div class="bar bottom">
      <div class="strip">{@render tools(bottomTools)}</div>
      <div class="logo">
        <svg viewBox="0 0 22 14" aria-hidden="true">
          <path d="M7 1q6 -2 4 1L9 5" stroke="#d2323c" />
          <path d="M3 5q9 1 4 5t-6 2L4 6" stroke="#33407e" />
          <path d="M19 4q-6 -1 -5 2t3 3 -5 3" stroke="#e88a2c" />
        </svg>
        <span>CATIA</span>
      </div>
    </div>
    <div class="status">
      <input type="text" aria-label="Comando" />
      <button class="raised" aria-label="Console">{@render icon("terminal")}</button>
      <button class="raised" aria-label="Informazioni">{@render icon("info")}</button>
      <div class="title preview">
        <h2>Anteprima</h2>
        <button class="cap" aria-label="Ripristina">{@render icon("restore")}</button>
        <button class="cap dim" aria-label="Ingrandisci">{@render icon("maximize")}</button>
        <button class="cap close" aria-label="Chiudi">✕</button>
      </div>
    </div>
  </footer>
</div>

<style>
  :global(body) {
    margin: 0;
  }

  .app {
    display: flex;
    flex-direction: column;
    min-height: 100vh;
    background: #d2d2ea;
    color: #1c1c1c;
    font: 7px/9px "DejaVu Sans Condensed", "DejaVu Sans", sans-serif;
  }

  button,
  select,
  input {
    box-sizing: border-box;
    margin: 0;
    padding: 0;
    border: 0;
    border-radius: 0;
    color: inherit;
    font: inherit;
  }

  button {
    background: none;
  }

  /* Toolbars */
  .bar {
    display: flex;
    align-items: center;
    background: linear-gradient(#eeeef8, #d4d4ec 30%, #cfcfe6 80%, #b4b4c8);
  }

  .top {
    box-sizing: border-box;
    height: 24px;
    padding: 0 4px;
    border-bottom: 2px solid #80828e;
  }

  .top .tool {
    margin-right: 1px;
  }

  .tool {
    position: relative;
    flex: none;
    width: 18px;
    height: 18px;
  }

  .icon {
    display: block;
    flex: none;
    width: 15px;
    height: 15px;
    margin: auto;
    overflow: visible;
  }

  .flyout::after {
    position: absolute;
    right: -2px;
    bottom: 0;
    border: 2px solid transparent;
    border-top-color: #111;
    border-bottom: 0;
    content: "";
  }

  .sep {
    flex: none;
    width: 1px;
    height: 12px;
    margin: 0 5px;
    border-left: 1px solid #fff;
    background: #b8b8cc;
  }

  .bar .sep:first-child {
    margin: 0 3px 0 4px;
  }

  .top > .sep:first-child {
    margin: 0 4px 0 0;
  }

  .combos {
    display: flex;
    gap: 3px;
    margin: 0 2px 0 5px;
  }

  .combo {
    position: relative;
    display: flex;
    border: 1px solid #8a8a96;
    background: #fff;
  }

  .combo select {
    width: 100%;
    height: 12px;
    padding-left: 2px;
    appearance: none;
    background: transparent;
    text-overflow: clip;
  }

  .combo::after {
    position: absolute;
    right: 1px;
    top: 1px;
    bottom: 1px;
    width: 9px;
    background:
      conic-gradient(from -45deg at 50% 100%, #111 90deg, transparent 0) center 60% / 6px 3px no-repeat,
      #d8d6d0;
    content: "";
    pointer-events: none;
  }

  .combo.l {
    width: 36px;
  }

  .combo.m {
    width: 34px;
  }

  .combo.s {
    width: 23px;
  }

  .swatch::before {
    position: absolute;
    inset: 1px 12px 1px 1px;
    border: 1px solid #555;
    content: "";
  }

  .off {
    background: #d4d4e2;
    color: #9c9ca8;
  }

  .off::after {
    opacity: 0.4;
  }

  /* Work area */
  main {
    display: flex;
    flex: 1;
    min-height: 0;
  }

  .viewport {
    position: relative;
    flex: 1;
    min-width: 0;
    overflow: hidden;
    border-left: 1px solid #7d8a96;
    background: linear-gradient(#04384b, #093d4f 35%, #18495a 67%, #35606d 77%, #5a7d87 88%, #8ca4aa);
  }

  .scene {
    position: absolute;
    inset: 0;
    width: 100%;
    height: 100%;
  }

  .wire {
    fill: none;
    stroke: #dc8a3e;
    stroke-width: 1.5;
  }

  .flange {
    fill: #c98a6c;
  }

  .weld {
    fill: #f47c14;
  }

  .flange-line {
    fill: none;
    stroke: #f58220;
    stroke-width: 1.3;
  }

  .shine {
    fill: none;
    stroke: #e8c4b0;
    stroke-width: 2;
  }

  .thin {
    stroke-width: 1.2;
    stroke-dasharray: 4 1 2 1;
  }

  .mesh {
    fill: none;
    stroke: #f3b88a;
    stroke-width: 1;
    stroke-dasharray: 1 2;
  }

  .contact {
    fill: none;
    stroke: #f2ee28;
    stroke-width: 1.6;
    stroke-dasharray: 12 6;
  }

  .contact-thin {
    fill: none;
    stroke: #f0d428;
    stroke-width: 1;
  }

  .compass {
    fill: none;
    stroke: #c4d6ea;
    stroke-width: 1.3;
  }

  .compass .dome {
    fill: #0c4450;
  }

  .compass circle {
    fill: #e0e8f8;
  }

  .compass .pivot {
    fill: #d01414;
    stroke: #d01414;
  }

  .compass text {
    fill: #86b838;
    stroke: none;
    font-size: 9px;
  }

  /* Specification tree */
  .tree {
    position: relative;
    margin: 0;
    padding: 0;
    list-style: none;
    color: #dcebea;
    font-size: 9px;
  }

  .tree li {
    display: flex;
    align-items: center;
    height: 16px;
  }

  .tree .icon {
    width: 12px;
    height: 12px;
    margin: 0 1px;
  }

  .tree .depth-1 {
    padding-left: 11px;
  }

  .tree .depth-2 {
    padding-left: 22px;
  }

  .tree .depth-3 {
    padding-left: 35px;
  }

  .knot {
    width: 12px;
    height: 16px;
    overflow: visible;
    fill: none;
    stroke: #d0dade;
  }

  .knot circle {
    fill: #5a6870;
    stroke: #1c2a30;
  }

  .label {
    padding: 0 1px 1px;
    background: #0a3c4c;
    line-height: 12px;
    white-space: nowrap;
  }

  .label.active {
    border-top: 1px solid #fff;
    background: #1468d8;
  }

  .label.hot {
    background: #f07d12;
    color: #fbe3a0;
  }

  /* Windows */
  .window {
    position: absolute;
    display: flex;
    flex-direction: column;
    border: 2px solid #0a3cc8;
    border-top: 0;
    border-radius: 5px 5px 0 0;
    background: #0a3cc8;
  }

  .title {
    display: flex;
    align-items: center;
    gap: 2px;
    height: 20px;
    padding: 0 2px;
    border-radius: 5px 5px 0 0;
    background: linear-gradient(#2a80f8, #0856e4 25%, #0660f4 80%, #0444c4);
    color: #fff;
  }

  .title h2 {
    flex: 1;
    margin: 0;
    font-size: 8px;
    font-weight: 700;
  }

  .cap {
    box-sizing: border-box;
    width: 14px;
    height: 14px;
    border: 1px solid #dfe8ff;
    border-radius: 2px;
    background: linear-gradient(135deg, #6f9cf4, #2858d0);
    color: #fff;
    font-size: 10px;
    font-weight: 700;
    line-height: 11px;
  }

  .cap.close {
    background: linear-gradient(135deg, #f09a7c, #d0401c);
  }

  .cap .icon {
    width: 9px;
    height: 9px;
  }

  .cap.dim {
    border-color: #5f86ea;
    background: #1c54d8;
  }

  .dialog {
    top: 79px;
    left: 582px;
    width: 398px;
  }

  .dialog .body {
    padding: 4px 5px 6px;
    background:
      radial-gradient(ellipse 28px 14px at 10px 100%, #284a60 30%, #7d98a8 85%, transparent),
      radial-gradient(circle 28px at 18px 97%, #fbbf50, transparent),
      linear-gradient(#eee0d8, #f0e0d2 40%, #fde6c2 85%);
  }

  fieldset {
    min-width: 0;
    margin: 0;
    padding: 0 4px 1px;
    border: 1px solid #c9beb0;
  }

  legend {
    padding: 0 1px;
  }

  .summary {
    display: flex;
    align-items: center;
    gap: 1px;
    height: 16px;
    margin: 2px 0 0;
  }

  .summary .icon {
    width: 13px;
    margin: 0 0 0 -3px;
  }

  .filters {
    display: flex;
    align-items: center;
    gap: 2px;
    height: 20px;
    margin-left: -3px;
  }

  .filters label {
    flex: none;
  }

  .f0 {
    width: 75px;
  }

  .f1 {
    width: 115px;
  }

  .f2 {
    width: 84px;
  }

  .pair {
    display: flex;
    margin-left: 4px;
  }

  .raised {
    box-sizing: border-box;
    width: 19px;
    height: 19px;
    border: 1px solid;
    border-color: #fff #55555c #55555c #fff;
    background: #ece4dc;
  }

  .tabs {
    display: flex;
    align-items: center;
    height: 18px;
  }

  .tabs button {
    height: 14px;
    padding: 0 6px 0 4px;
    border-right: 1px solid #d8ccc0;
  }

  .tabs button.active {
    padding: 0 8px 0 7px;
    border-right: 1px solid #444;
  }

  .tabs button:last-child {
    border-right: 1px solid #444;
  }

  .panel {
    box-sizing: border-box;
    height: 219px;
    padding: 1px 4px 4px 2px;
    border: solid;
    border-width: 1px 1px 2px;
    border-color: #fff #4a4640 #4a4640 #cfc4b4;
    background: linear-gradient(#f0e4da, #fbe8cc);
  }

  .panel::after {
    display: block;
    height: 182px;
    background: #fff;
    content: "";
  }

  table {
    width: 100%;
    border-spacing: 0;
    background: #fff;
    table-layout: fixed;
  }

  th,
  td {
    overflow: hidden;
    height: 8px;
    padding: 0 3px;
    font-weight: 400;
    line-height: 8px;
    text-align: left;
    white-space: nowrap;
  }

  th {
    height: 9px;
    border-right: 1px solid #6c6c68;
    border-top: 1px solid #555;
    background: #ecdfd4;
    line-height: 9px;
  }

  th:last-child {
    border-right: 0;
  }

  td {
    border-bottom: 1px dashed #1c4490;
    background: #2e66c4;
    color: #b8dcf4;
  }

  td:first-child {
    padding-left: 1px;
  }

  td.rest {
    border-color: #fff;
    background: #fff;
  }

  .c0 {
    width: 13px;
  }

  .c1,
  .c2 {
    width: 54px;
  }

  .c3 {
    width: 3px;
    padding: 0;
  }

  .c4,
  .c6 {
    width: 39px;
  }

  .c5 {
    width: 27px;
  }

  .c7 {
    width: 67px;
  }

  .actions {
    display: flex;
    justify-content: flex-end;
    gap: 2px;
    margin: 5px 0 0;
  }

  .main-actions {
    gap: 5px;
    margin-top: 7px;
  }

  .raised.text {
    width: auto;
    height: 13px;
    padding: 0 2px;
    border-right-width: 2px;
    border-bottom-width: 2px;
    border-color: #fff #7c7c92 #7c7c92 #fff;
    background: #dedeee;
    line-height: 8px;
  }

  .raised.wide {
    display: flex;
    align-items: center;
    gap: 4px;
    width: 42px;
    padding: 0 3px;
  }

  .raised.tight {
    gap: 0;
    padding: 0 1px;
  }

  .tight .ball {
    margin-right: -2px;
  }

  .ball {
    flex: none;
    width: 8px;
    height: 8px;
    border-radius: 50%;
    background: radial-gradient(circle at 35% 30%, #d8ffd8, #22a030 45%, #0c5c18);
  }

  .ball.teal {
    background: radial-gradient(circle at 35% 30%, #d0f0e8, #2c7868 45%, #0c3434);
  }

  .ball.red {
    background: radial-gradient(circle at 35% 30%, #ffe0d8, #dc4838 45%, #882018);
  }

  .capture {
    right: 7px;
    bottom: 6px;
    width: 123px;
    border-color: #5878dc;
    background: #5878dc;
  }

  .capture .title {
    height: 17px;
    background: linear-gradient(#8aa4f4, #5c80e4 40%, #6488ec);
    color: #d4def8;
  }

  .capture .cap {
    opacity: 0.8;
  }

  .capture .body {
    display: flex;
    align-items: center;
    height: 30px;
    padding: 0 4px;
    background:
      radial-gradient(ellipse 28px 14px at 10px 100%, #4a6478 40%, #a0b0b8 90%, transparent),
      linear-gradient(90deg, #fbd89c, #fbe6c8 30%, #f6e4d0);
  }

  .space {
    flex: 1;
  }

  .pressed {
    border-color: #555 #fff #fff #555;
  }

  /* Side toolbars */
  aside {
    box-sizing: border-box;
    display: flex;
    justify-content: space-between;
    flex: none;
    width: 58px;
    padding: 2px 3px 16px 1px;
    border-left: 2px solid #f4f4fc;
    background: linear-gradient(90deg, #d6d6ee, #cfcfea 80%, #c0c0d8);
  }

  .column {
    display: flex;
    flex-direction: column;
    justify-content: space-between;
    align-items: center;
    width: 18px;
  }

  .products {
    height: 58%;
  }

  .column .sep {
    align-self: start;
    width: 10px;
    height: 1px;
    margin: 5px 0 4px;
    border: 0;
    border-top: 1px solid #fff;
  }

  .column .sep:first-child {
    margin-top: 0;
  }

  .view-no {
    font: 700 11px "Liberation Sans", sans-serif;
    text-anchor: middle;
  }

  .view-no.red {
    fill: #c02838;
  }

  .view-no.blue {
    fill: #2838b0;
  }

  /* Bottom */
  .bottom {
    box-sizing: border-box;
    height: 25px;
    border-top: 3px solid #f2f2fa;
    border-bottom: 2px solid #84869a;
  }

  .strip {
    display: flex;
    flex: 1;
    align-items: center;
    justify-content: space-between;
  }

  .fx {
    font: italic 700 10px "Liberation Serif", serif;
  }

  .logo {
    width: 76px;
    padding-right: 4px;
    box-sizing: border-box;
    color: #33407e;
    font: italic 700 7px/7px "Liberation Sans", sans-serif;
    text-align: right;
  }

  .logo svg {
    display: block;
    width: 22px;
    height: 14px;
    margin-left: auto;
    fill: none;
    stroke-width: 1.6;
  }

  .status {
    position: relative;
    display: flex;
    justify-content: flex-end;
    height: 16px;
    background: #cfcfe8;
  }

  .status input {
    width: 198px;
    height: 12px;
    margin-top: 3px;
    padding: 0 2px;
    border: 1px solid #8c8c9c;
    background: #fff;
  }

  .status .raised {
    width: 22px;
    height: 14px;
    margin-top: 2px;
    background: #d6d6e6;
  }

  .status .icon {
    width: 10px;
    height: 10px;
  }

  .preview {
    position: absolute;
    bottom: 0;
    left: 0;
    box-sizing: border-box;
    width: 106px;
    height: 20px;
    padding: 0 3px 0 4px;
  }
</style>
